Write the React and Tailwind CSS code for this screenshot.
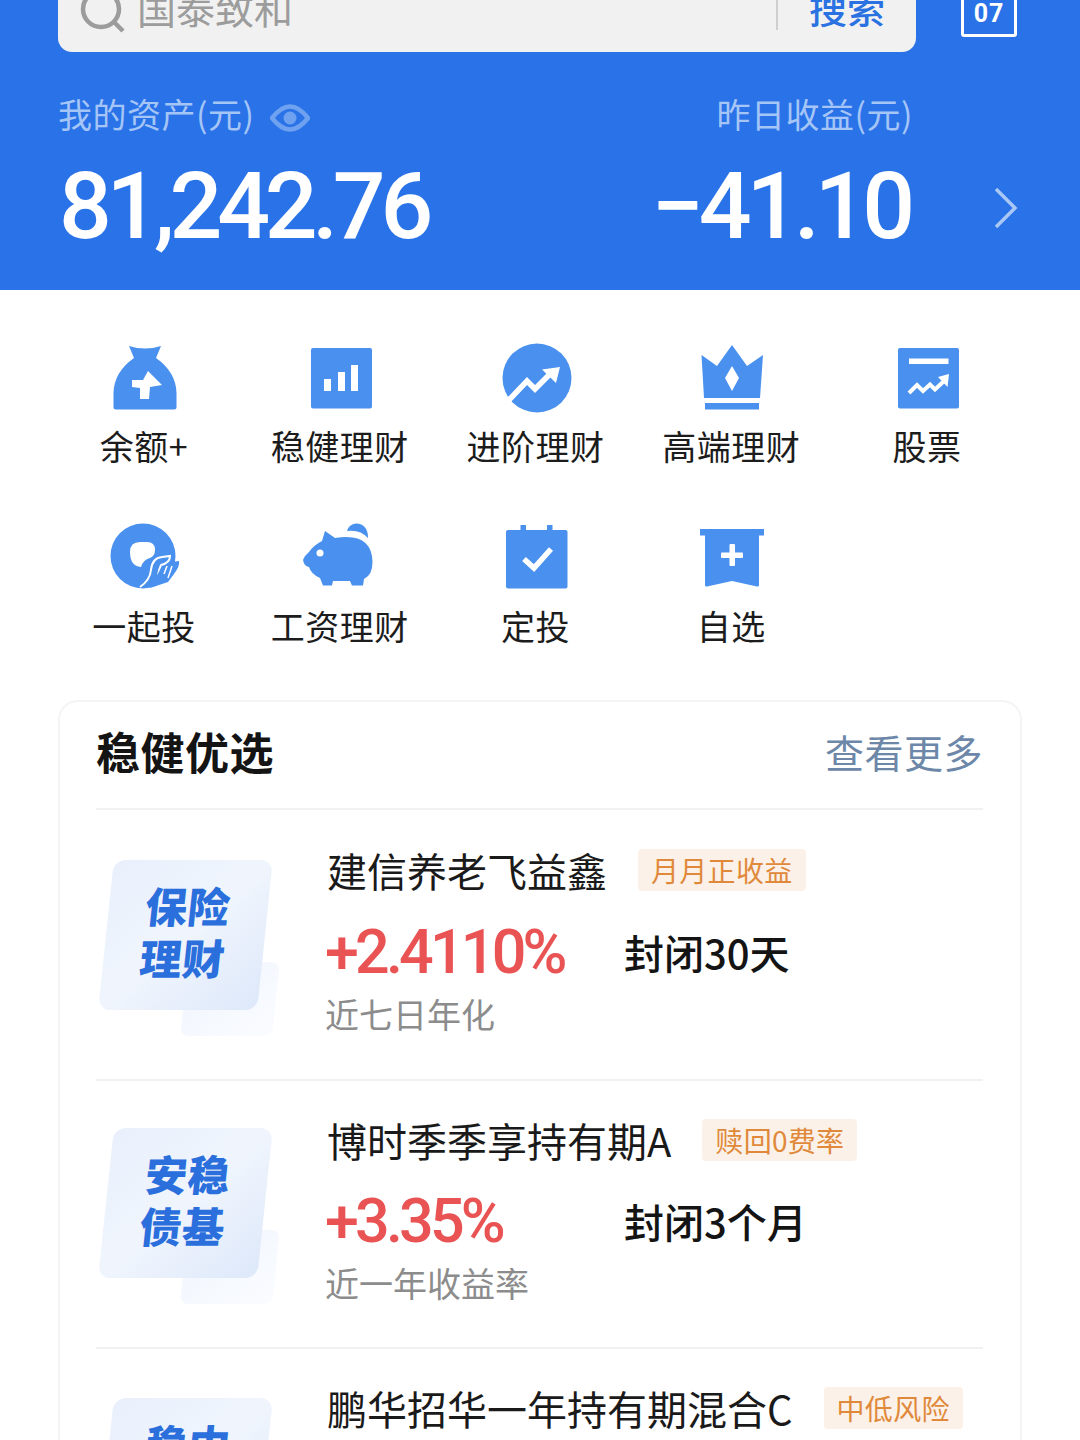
const cjk = "font-['Noto_Sans_CJK_SC','Noto_Sans',sans-serif]";

function Icon({ box, children }) {
  const [x, y, w, h] = box;
  return (
    <svg viewBox={`${x} ${y} ${w} ${h}`} width={w} height={h} className="block">
      {children}
    </svg>
  );
}

const B = "#4a90ee";

const icons = {
  bag: (
    <Icon box={[109, 342, 72, 72]}>
      <path d="M129 346 Q145 351 161 346 L156 358 Q176 372 176.500 393 V407 Q176.500 409.500 174 409.500 H116 Q113.500 409.500 113.500 407 V393 Q114 372 134 358 Z" fill={B} />
      <path d="M148 371 L162 385 L150 387 L149 399 H140 V388 L132 387 V380 H143 Z" fill="#fff" />
    </Icon>
  ),
  bars: (
    <Icon box={[305, 342, 72, 72]}>
      <rect x="311" y="348" width="61" height="60.500" rx="2" fill={B} />
      <rect x="324" y="379" width="7" height="12" fill="#fff" />
      <rect x="338" y="372" width="7" height="19" fill="#fff" />
      <rect x="351" y="365" width="7" height="26" fill="#fff" />
    </Icon>
  ),
  up: (
    <Icon box={[500, 342, 72, 72]}>
      <circle cx="537" cy="378" r="34.500" fill={B} />
      <path d="M507 402 L527 381 L535 389 L551 373" stroke="#fff" strokeWidth="5.500" fill="none" />
      <path d="M560 367 L542 369.500 L556 383 Z" fill="#fff" />
    </Icon>
  ),
  crown: (
    <Icon box={[696, 342, 72, 72]}>
      <path d="M701.500 355 L717 366 L732 345 L747 366 L763 355 L760 398 H704 Z" fill={B} />
      <rect x="705" y="403" width="54" height="6.500" fill={B} />
      <path d="M732 366 L739 378 L732 391 L725 378 Z" fill="#fff" />
    </Icon>
  ),
  stock: (
    <Icon box={[892, 342, 72, 72]}>
      <rect x="898" y="348" width="61" height="60.500" rx="2" fill={B} />
      <rect x="909" y="358.500" width="39.500" height="5.500" fill="#fff" />
      <path d="M909 393 L917 385 L923 391 L930 384.500 L935 389.500 L944 381" stroke="#fff" strokeWidth="4" fill="none" />
      <path d="M949 374 L938 377 L947.500 387 Z" fill="#fff" />
    </Icon>
  ),
  hand: (
    <Icon box={[109, 522, 72, 72]}>
      <circle cx="143" cy="556" r="32.500" fill={B} />
      <path d="M130 552 Q130 542 140 542 H147 Q155 542 155 550 Q155 556 150 558 Q143 560 141 567 Q130 566 130 552 Z" fill="#fff" />
      <path d="M140 587 Q150 580 151 570 Q152 558 162 557 L170 556 Q170 563 161 565 Q157 574 158 583" stroke="#fff" strokeWidth="2" fill={B} />
      <path d="M161 568 L172 562 L179 561 Q180 566 174 574 L168 582 L150 588 Z" fill={B} />
      <path d="M167 566 L164 574 M172 566 L168 578" stroke="#fff" strokeWidth="1.500" fill="none" />
    </Icon>
  ),
  pig: (
    <Icon box={[299, 522, 84, 72]}>
      <path d="M303 560 Q305 555 309 552 Q314 545 322 541 L325 531 L335 538 Q372 532 372.500 562 Q372.500 575 364 579 L363 585.500 H352 L350 581 H333 L332 585.500 H323 L320 578 Q311 574 309 567 Q304 566 303 560 Z" fill={B} />
      <circle cx="320" cy="553" r="3.500" fill="#fff" />
      <path d="M347 531 Q349 524 356 523.500 Q368 524 368 538 Q360 529 347 531 Z" fill={B} />
    </Icon>
  ),
  cal: (
    <Icon box={[500, 522, 72, 72]}>
      <rect x="506" y="530" width="61.500" height="58.500" rx="2" fill={B} />
      <rect x="520.500" y="525" width="5.500" height="7" fill={B} />
      <rect x="547" y="525" width="5.500" height="7" fill={B} />
      <path d="M524 559 L534 568 L551 549" stroke="#fff" strokeWidth="5.500" fill="none" />
    </Icon>
  ),
  mark: (
    <Icon box={[696, 522, 72, 72]}>
      <rect x="700" y="529" width="64" height="6.500" fill={B} />
      <path d="M705 534 H759 V585 Q759 587 757 586.500 L732 581 L707 586.500 Q705 587 705 585 Z" fill={B} />
      <rect x="721" y="552.500" width="22" height="5.500" rx="1" fill="#fff" />
      <rect x="729.500" y="544" width="5.500" height="22" rx="1" fill="#fff" />
    </Icon>
  ),
};

const row1 = [
  ["bag", "余额+"],
  ["bars", "稳健理财"],
  ["up", "进阶理财"],
  ["crown", "高端理财"],
  ["stock", "股票"],
];
const row2 = [
  ["hand", "一起投"],
  ["pig", "工资理财"],
  ["cal", "定投"],
  ["mark", "自选"],
];

function Entry({ icon, label }) {
  return (
    <div className="flex flex-col items-center h-[180px]">
      {icons[icon]}
      <div className="mt-[10px] pr-[2px] h-[44px] leading-[44px] text-[34px] tracking-[0.500px] text-[#1c1c1c] whitespace-nowrap">{label}</div>
    </div>
  );
}

function Thumb({ a, b, top }) {
  return (
    <div className={`relative ml-[10px] w-[159px] h-[150px] ${top}`}>
      <div className="absolute left-[78px] top-[102px] w-[92px] h-[74px] -skew-x-6 rounded-[8px] bg-gradient-to-br from-[#f0f5fd] to-[#fafcff]" />
      <div className="relative w-[159px] h-[150px] -skew-x-6 rounded-[12px] bg-gradient-to-br from-[#e9f0fc] via-[#f0f5fd] to-[#dde8fa] flex flex-col items-center justify-center pb-[8px] pr-[1px] text-[42px] leading-[52px] font-black text-[#2a6fdc] tracking-[0.500px]">
        <div className="whitespace-nowrap">{a}</div>
        <div className="whitespace-nowrap">{b}</div>
      </div>
    </div>
  );
}

function Product({ cls, a, b, top, rowTop, title, tag, pct, lock, sub }) {
  return (
    <div className={`flex border-b-2 border-[#f0f1f3] ${cls}`}>
      <div className="w-[231px] shrink-0">
        <Thumb a={a} b={b} top={top} />
      </div>
      <div className="flex-1 min-w-0">
        <div className="flex items-center h-[44px]">
          <span className="text-[40px] leading-[44px] text-[#1a1a1a] whitespace-nowrap">{title}</span>
          <span className="ml-[31px] h-[42px] px-[13px] rounded-[4px] bg-[#fbf1e8] text-[#e0893a] text-[28px] tracking-[0.300px] leading-[42px] whitespace-nowrap">{tag}</span>
        </div>
        {pct && (
          <>
            <div className={`flex items-center h-[70px] ${rowTop}`}>
              <span className="w-[299px] -ml-[2px] shrink-0 font-['Roboto',sans-serif] font-medium text-[61px] leading-[70px] text-[#e95354] tracking-[-3.800px]">{pct}</span>
              <span className="text-[40px] leading-[70px] font-medium text-[#141414] whitespace-nowrap">{lock}</span>
            </div>
            <div className="mt-[5px] -ml-[2px] text-[34px] leading-[44px] text-[#8c8c8c]">{sub}</div>
          </>
        )}
      </div>
    </div>
  );
}

export default function App() {
  return (
    <div className={`w-[1080px] h-[1440px] overflow-hidden bg-white ${cjk}`}>
      <header className="h-[290px] bg-[#2972e8] flex flex-col">
        <div className="flex items-end h-[52px] pl-[58px]">
          <div className="w-[858px] h-[84px] shrink-0 flex items-center pb-[6px] bg-[#f1f1f1] rounded-b-[14px]">
            <svg width="46" height="46" viewBox="0 0 46 46" className="ml-[21px] mt-[10px] shrink-0" fill="none" stroke="#9c9c9c" strokeWidth="4.500">
              <circle cx="22" cy="20" r="18" />
              <path d="M35 33 L44 42" />
            </svg>
            <span className="ml-[12px] text-[39px] leading-[50px] text-[#9c9c9c] flex-1">国泰致和</span>
            <span className="w-[2px] h-[44px] mt-[2px] bg-[#cfcfcf]" />
            <span className="ml-[31px] mr-[31px] text-[38px] leading-[50px] font-medium text-[#2a72e2]">搜索</span>
          </div>
          <div className="ml-[45px] mb-[15px] w-[56px] h-[60px] border-[3px] border-white rounded-[3px] flex items-end justify-center pb-[6px] text-white text-[25px] tracking-[1px] leading-[28px] font-['Roboto',sans-serif] font-bold">07</div>
        </div>
        <div className="flex pl-[58px] mt-[41px]">
          <div className="w-[500px]">
            <div className="flex items-center h-[42px] text-[34px] tracking-[0.500px] leading-[42px] text-[#a4c5f6]">
              我的资产(元)
              <svg width="40" height="34" viewBox="0 0 40 34" className="ml-[16px] mt-[7px]" fill="none">
                <path d="M2 17 Q20 -6 38 17 Q20 40 2 17 Z" stroke="#6ea2f0" strokeWidth="4.500" />
                <circle cx="20" cy="17" r="6.500" fill="#6ea2f0" />
              </svg>
            </div>
            <div className="mt-[22px] ml-[1px] font-['Roboto',sans-serif] font-medium text-[93px] leading-[100px] text-white tracking-[-5.300px] whitespace-nowrap">81,242.76</div>
          </div>
          <div className="w-[355px] flex flex-col items-end">
            <div className="h-[42px] text-[34px] tracking-[0.500px] leading-[42px] text-[#a4c5f6] whitespace-nowrap">昨日收益(元)</div>
            <div className="mt-[22px] mr-[3px] font-['Roboto',sans-serif] font-medium text-[93px] leading-[100px] text-white tracking-[-5.200px] whitespace-nowrap">−41.10</div>
          </div>
          <svg width="26" height="44" viewBox="0 0 26 44" className="ml-[80px] mt-[93px] shrink-0" fill="none" stroke="#a9c8f6" strokeWidth="3.500">
            <path d="M3 3 L22 22 L3 41" />
          </svg>
        </div>
      </header>

      <section className="grid grid-cols-5 w-[979px] ml-[47px] pt-[52px]">
        {row1.map(([i, l]) => <Entry key={l} icon={i} label={l} />)}
        {row2.map(([i, l]) => <Entry key={l} icon={i} label={l} />)}
      </section>

      <section className="mx-[58px] mt-[-2px] h-[900px] border-2 border-[#f3f4f6] rounded-[20px] pl-[36px] pr-[37px]">
        <div className="flex items-center justify-between h-[108px] pb-[8px] border-b-2 border-[#f0f1f3]">
          <span className="text-[44px] font-bold tracking-[0.500px] text-[#141414] leading-[54px]">稳健优选</span>
          <span className="text-[39px] leading-[50px] tracking-[0.500px] text-[#6c87a8]">查看更多</span>
        </div>
        <Product cls="h-[271px] pt-[38px]" a="保险" b="理财" top="mt-[12px]" rowTop="mt-[25px]" title="建信养老飞益鑫" tag="月月正收益" pct="+2.4110%" lock="封闭30天" sub="近七日年化" />
        <Product cls="h-[268px] pt-[37px]" a="安稳" b="债基" top="mt-[10px]" rowTop="mt-[24px]" title="博时季季享持有期A" tag="赎回0费率" pct="+3.35%" lock="封闭3个月" sub="近一年收益率" />
        <Product cls="h-[268px] pt-[37px]" a="稳中" b="求进" top="mt-[12px]" title="鹏华招华一年持有期混合C" tag="中低风险" />
      </section>
    </div>
  );
}
